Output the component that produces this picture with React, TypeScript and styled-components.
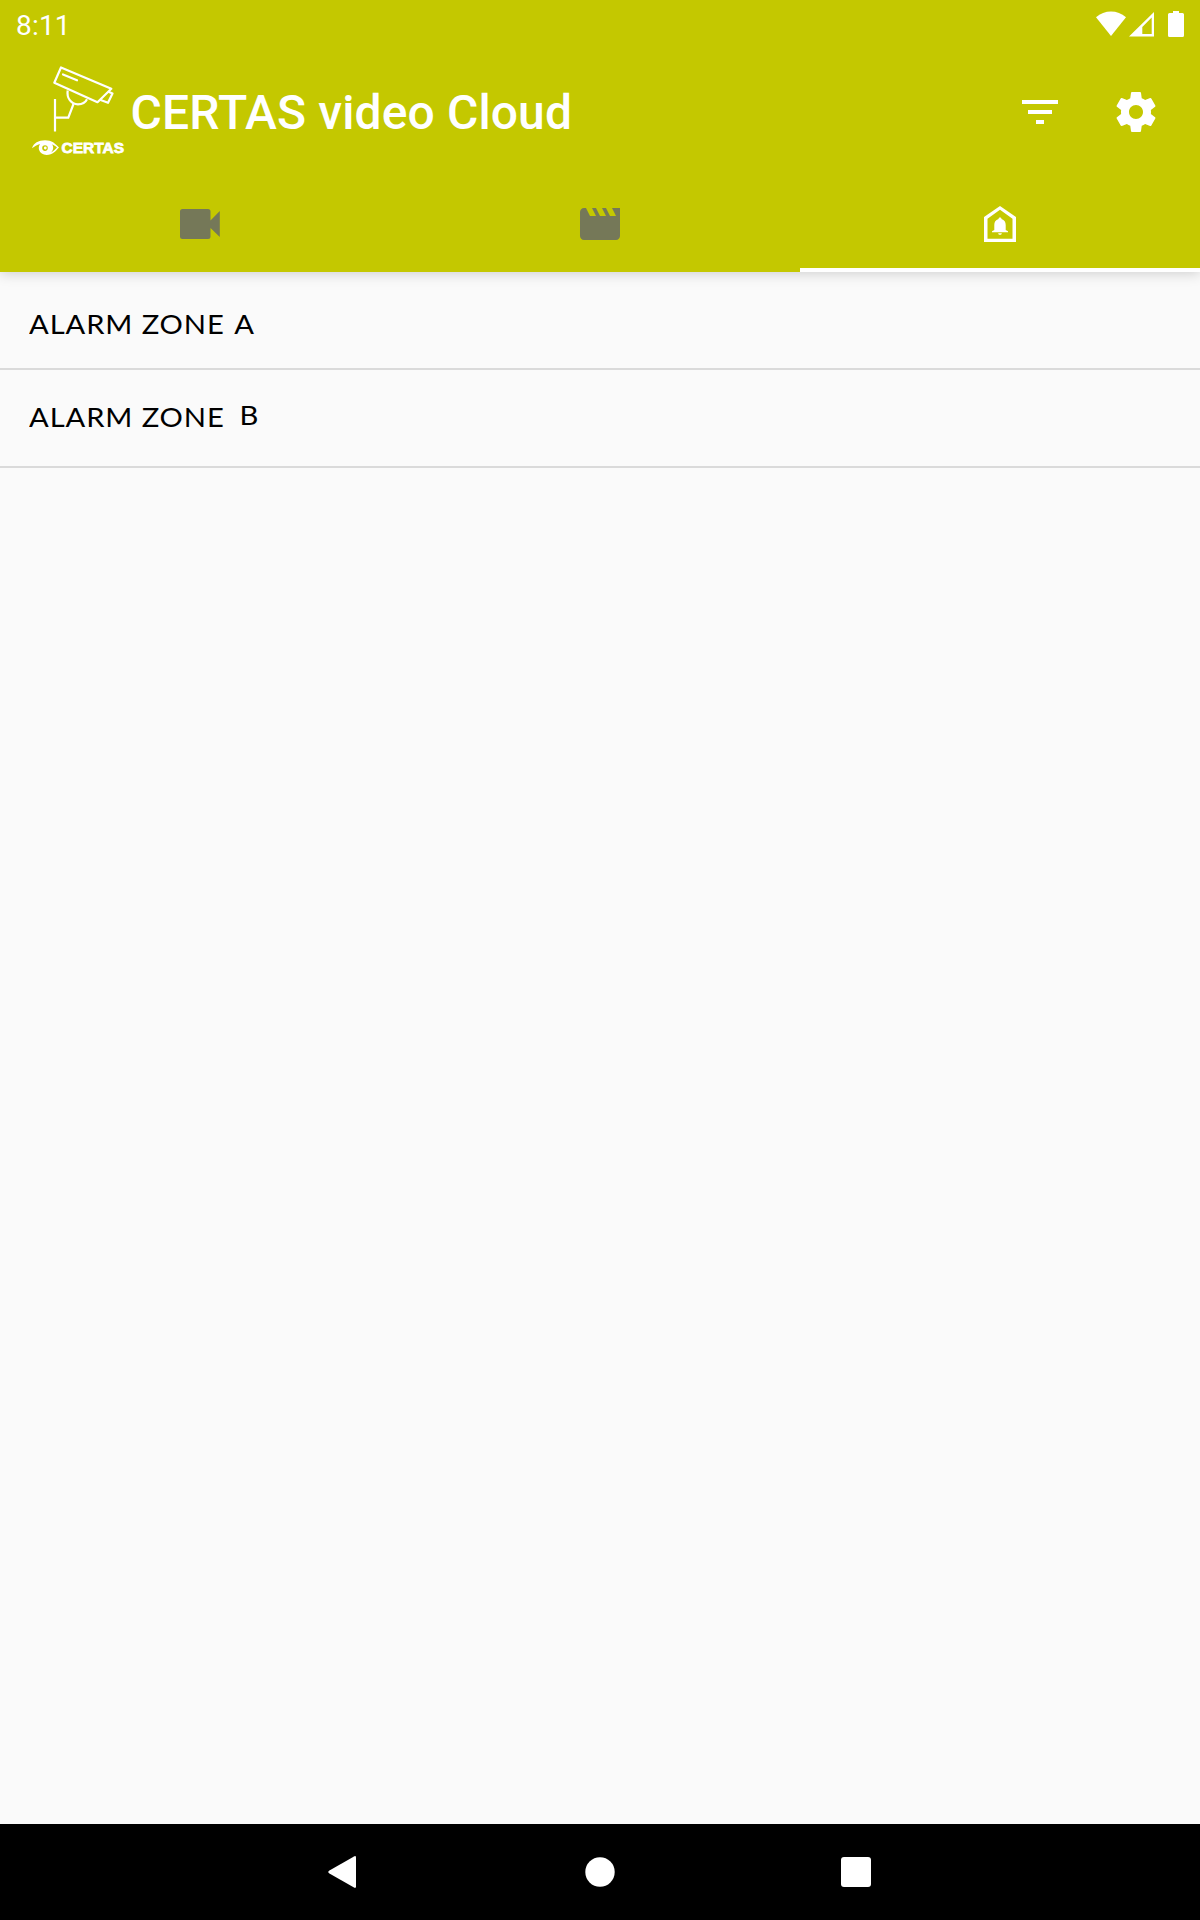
import React from "react";
import styled, { createGlobalStyle } from "styled-components";

const GlobalStyle = createGlobalStyle`
  *, *::before, *::after { box-sizing: border-box; }
  body { margin: 0; background: #fafafa; font-family: Roboto, sans-serif; }
  svg { display: block; }
`;

const Screen = styled.div`
  display: flex;
  flex-direction: column;
  width: 1200px;
  height: 1920px;
  background: #fafafa;
  overflow: hidden;
`;

const Header = styled.header`
  display: flex;
  flex-direction: column;
  height: 272px;
  flex: none;
  background: #c4c800;
  color: #fff;
  box-shadow: 0 2px 12px rgba(0, 0, 0, 0.17);
`;

const StatusBar = styled.div`
  display: flex;
  justify-content: space-between;
  height: 48px;
  padding: 0 16px;
`;

const Clock = styled.span`
  font-size: 28px;
  line-height: 52px;
  letter-spacing: 0.2px;
`;

const StatusIcons = styled.div`
  display: flex;
  padding-top: 8px;
`;

const Toolbar = styled.div`
  display: flex;
  align-items: center;
  height: 128px;
  padding: 0 40px 0 25px;
`;

const Title = styled.h1`
  flex: 1;
  margin: 2px 0 0 -4.5px;
  font-size: 48px;
  font-weight: 500;
  line-height: 56px;
  letter-spacing: 0.12px;
  white-space: nowrap;
`;

const Actions = styled.div`
  display: flex;
  gap: 48px;
`;

const IconButton = styled.button`
  padding: 0;
  border: 0;
  background: none;
  color: inherit;
  width: 48px;
  height: 48px;
`;

const TabBar = styled.nav`
  display: grid;
  grid-template-columns: repeat(3, 1fr);
  height: 96px;
`;

const Tab = styled.button<{ $active?: boolean }>`
  display: flex;
  align-items: center;
  justify-content: center;
  padding: 4px 0 0;
  border: 0;
  border-bottom: 4px solid ${(p) => (p.$active ? "#fff" : "transparent")};
  background: none;
  color: ${(p) => (p.$active ? "#fff" : "#757858")};
`;

const ZoneList = styled.ul`
  flex: 1;
  margin: 0;
  padding: 0;
  list-style: none;
`;

const ZoneRow = styled.li<{ $top: number }>`
  display: flex;
  align-items: flex-start;
  height: 98px;
  padding: ${(p) => p.$top}px 29px 0;
  border-bottom: 2px solid #dadada;
  color: #000;
`;

const ZoneName = styled.div`
  display: flex;
  font-family: Lato, sans-serif;
  font-size: 27.5px;
  letter-spacing: 0.85px;
  line-height: 34px;
  transform: scaleX(1.06);
  transform-origin: left center;
`;

const ZoneLetter = styled.span<{ $gap: number; $lift: number }>`
  margin-left: ${(p) => p.$gap}px;
  margin-top: ${(p) => -p.$lift}px;
`;

const NavBar = styled.footer`
  display: flex;
  align-items: center;
  justify-content: center;
  gap: 208px;
  height: 96px;
  flex: none;
  background: #000;
`;

const NavButton = styled.button`
  width: 48px;
  height: 48px;
  padding: 0;
  border: 0;
  background: none;
`;

const BrandLogo = () => (
  <svg width="110" height="100" viewBox="25 62 110 100" fill="none" stroke="#fff" strokeWidth="2.2">
    <path d="M61 67.500 111.300 88.800 97.500 102.200 54.300 82.800Z" strokeLinejoin="round" />
    <path d="M63 74.500 77 80.300" strokeLinecap="round" />
    <path d="M108.500 91.800 112.500 93.600 108 102.800 100 99.800" strokeLinejoin="round" />
    <path d="M67.700 90.500C66.500 98 71 104.300 78 104.300 82.500 104.300 85.500 102.300 87 99.200" />
    <path d="M55 99V131.500M55 117.600H68.300L73.500 104" />
    <g stroke="none" fill="#fff">
      <path
        fillRule="evenodd"
        d="M32 148.300C33.500 143 38.500 140.300 45 140.300 52 140.300 55 143.500 59 147.500 55.500 151 53 154.900 46.500 154.900 43 154.900 40 153 39 149.800 38.500 147.500 39 145.500 40 144 37 144.700 34.500 146.500 32 148.300ZM52 144.200C54 147 53.500 150.500 50.500 152.800 53 151.800 55 149.500 57 147.500 55.500 146 54 145 52 144.200ZM45 145.300A2.800 2.800 0 1 0 45 150.900 2.800 2.800 0 1 0 45 145.300Z"
      />
      <circle cx="45.3" cy="148" r="1.4" />
      <text
        x="61.5"
        y="153"
        textLength="62.500"
        lengthAdjust="spacingAndGlyphs"
        fontFamily="Liberation Sans, sans-serif"
        fontSize="15.5"
        fontWeight="700"
        stroke="#fff"
        strokeWidth=".8"
      >
        CERTAS
      </text>
    </g>
  </svg>
);

const SignalIcons = () => (
  <svg width="90" height="32" viewBox="1094 8 90 32" fill="#fff">
    <path d="M1096 17.200C1104.500 9.500 1117.500 9.500 1126 17.200L1111 36Z" />
    <path fillRule="evenodd" d="M1129 36.500 1154 12V36.500ZM1142.300 34H1151.700V17.500L1142.300 27Z" />
    <path d="M1173 11H1179V13H1182.500Q1184 13 1184 14.500V35.500Q1184 37 1182.500 37H1169.500Q1168 37 1168 35.500V14.500Q1168 13 1169.500 13H1173Z" />
  </svg>
);

const FilterIcon = () => (
  <svg width="48" height="48" viewBox="0 0 24 24" fill="currentColor">
    <path d="M10 18h4v-2h-4v2zM3 6v2h18V6H3zm3 7h12v-2H6v2z" />
  </svg>
);

const GearIcon = () => (
  <svg width="48" height="48" viewBox="0 0 24 24" fill="currentColor">
    <path d="M19.430 12.980c.04-.32.07-.64.07-.98s-.03-.66-.07-.98l2.110-1.650c.19-.15.24-.42.12-.64l-2-3.460c-.12-.22-.39-.3-.61-.22l-2.490 1c-.52-.4-1.080-.73-1.690-.98l-.38-2.650C14.460 2.180 14.250 2 14 2h-4c-.25 0-.46.18-.49.42l-.38 2.650c-.61.25-1.170.59-1.690.98l-2.490-1c-.23-.09-.49 0-.61.22l-2 3.460c-.13.22-.07.49.12.64l2.110 1.650c-.04.32-.07.65-.07.98s.03.66.07.98l-2.110 1.650c-.19.15-.24.42-.12.64l2 3.460c.12.22.39.3.61.22l2.490-1c.52.4 1.080.73 1.690.98l.38 2.650c.03.24.24.42.49.42h4c.25 0 .46-.18.49-.42l.38-2.650c.61-.25 1.170-.59 1.690-.98l2.490 1c.23.09.49 0 .61-.22l2-3.460c.12-.22.07-.49-.12-.64l-2.110-1.650zM12 15.500c-1.930 0-3.500-1.570-3.500-3.500s1.570-3.500 3.500-3.500 3.500 1.570 3.500 3.500-1.570 3.500-3.500 3.500z" />
  </svg>
);

const CameraIcon = () => (
  <svg width="48" height="48" viewBox="0 0 48 48" fill="currentColor">
    <path d="M6.500 9H32Q34.500 9 34.500 11.500V20.500L43.800 11V37L34.500 28V36.500Q34.500 39 32 39H6.500Q4 39 4 36.500V11.500Q4 9 6.500 9Z" />
  </svg>
);

const MovieIcon = () => (
  <svg width="48" height="48" viewBox="0 0 24 24" fill="currentColor">
    <path d="M18 4l2 4h-3l-2-4h-2l2 4h-3l-2-4H8l2 4H7L5 4H4c-1.100 0-1.990.9-1.990 2L2 18c0 1.100.9 2 2 2h16c1.100 0 2-.9 2-2V4h-4z" />
  </svg>
);

const AlarmHomeIcon = () => (
  <svg width="48" height="48" viewBox="0 0 48 48" fill="currentColor">
    <path fillRule="evenodd" d="M24 6 40 17V42H8V17ZM24 9.800 11.500 18.700V38.700H36.500V18.700Z" />
    <path d="M24 17.500C25 17.500 25.500 18.100 25.500 19 28.500 19.800 29.700 22.200 29.700 25V30L32 31.200V32.200H16V31.200L18.300 30V25C18.300 22.200 19.500 19.800 22.500 19 22.500 18.100 23 17.500 24 17.500ZM22.200 33.200H25.800C25.800 35.300 22.200 35.300 22.200 33.200Z" />
  </svg>
);

const zones = [
  { letter: "A", top: 35, gap: 9, lift: 0 },
  { letter: "B", top: 30, gap: 14, lift: 2 },
];

export default function App() {
  return (
    <>
      <GlobalStyle />
      <Screen>
        <Header>
          <StatusBar>
            <Clock>8:11</Clock>
            <StatusIcons>
              <SignalIcons />
            </StatusIcons>
          </StatusBar>
          <Toolbar>
            <BrandLogo />
            <Title>CERTAS video Cloud</Title>
            <Actions>
              <IconButton aria-label="Filter"><FilterIcon /></IconButton>
              <IconButton aria-label="Settings"><GearIcon /></IconButton>
            </Actions>
          </Toolbar>
          <TabBar>
            <Tab aria-label="Cameras"><CameraIcon /></Tab>
            <Tab aria-label="Recordings"><MovieIcon /></Tab>
            <Tab aria-label="Alarm zones" $active><AlarmHomeIcon /></Tab>
          </TabBar>
        </Header>
        <ZoneList>
          {zones.map((z) => (
            <ZoneRow key={z.letter} $top={z.top}>
              <ZoneName>
                <span>ALARM ZONE</span>
                <ZoneLetter $gap={z.gap} $lift={z.lift}>{z.letter}</ZoneLetter>
              </ZoneName>
            </ZoneRow>
          ))}
        </ZoneList>
        <NavBar>
          <NavButton aria-label="Back">
            <svg width="48" height="48" viewBox="0 0 48 48" fill="#fff">
              <path d="M36 9.500V38.500Q36 40.500 34 39.600L9 25.200Q7.200 24 9 22.800L34 8.400Q36 7.500 36 9.500Z" />
            </svg>
          </NavButton>
          <NavButton aria-label="Home">
            <svg width="48" height="48" viewBox="0 0 48 48" fill="#fff">
              <circle cx="24" cy="24" r="14.7" />
            </svg>
          </NavButton>
          <NavButton aria-label="Recent apps">
            <svg width="48" height="48" viewBox="0 0 48 48" fill="#fff">
              <rect x="9" y="9" width="30" height="30" rx="3" />
            </svg>
          </NavButton>
        </NavBar>
      </Screen>
    </>
  );
}
